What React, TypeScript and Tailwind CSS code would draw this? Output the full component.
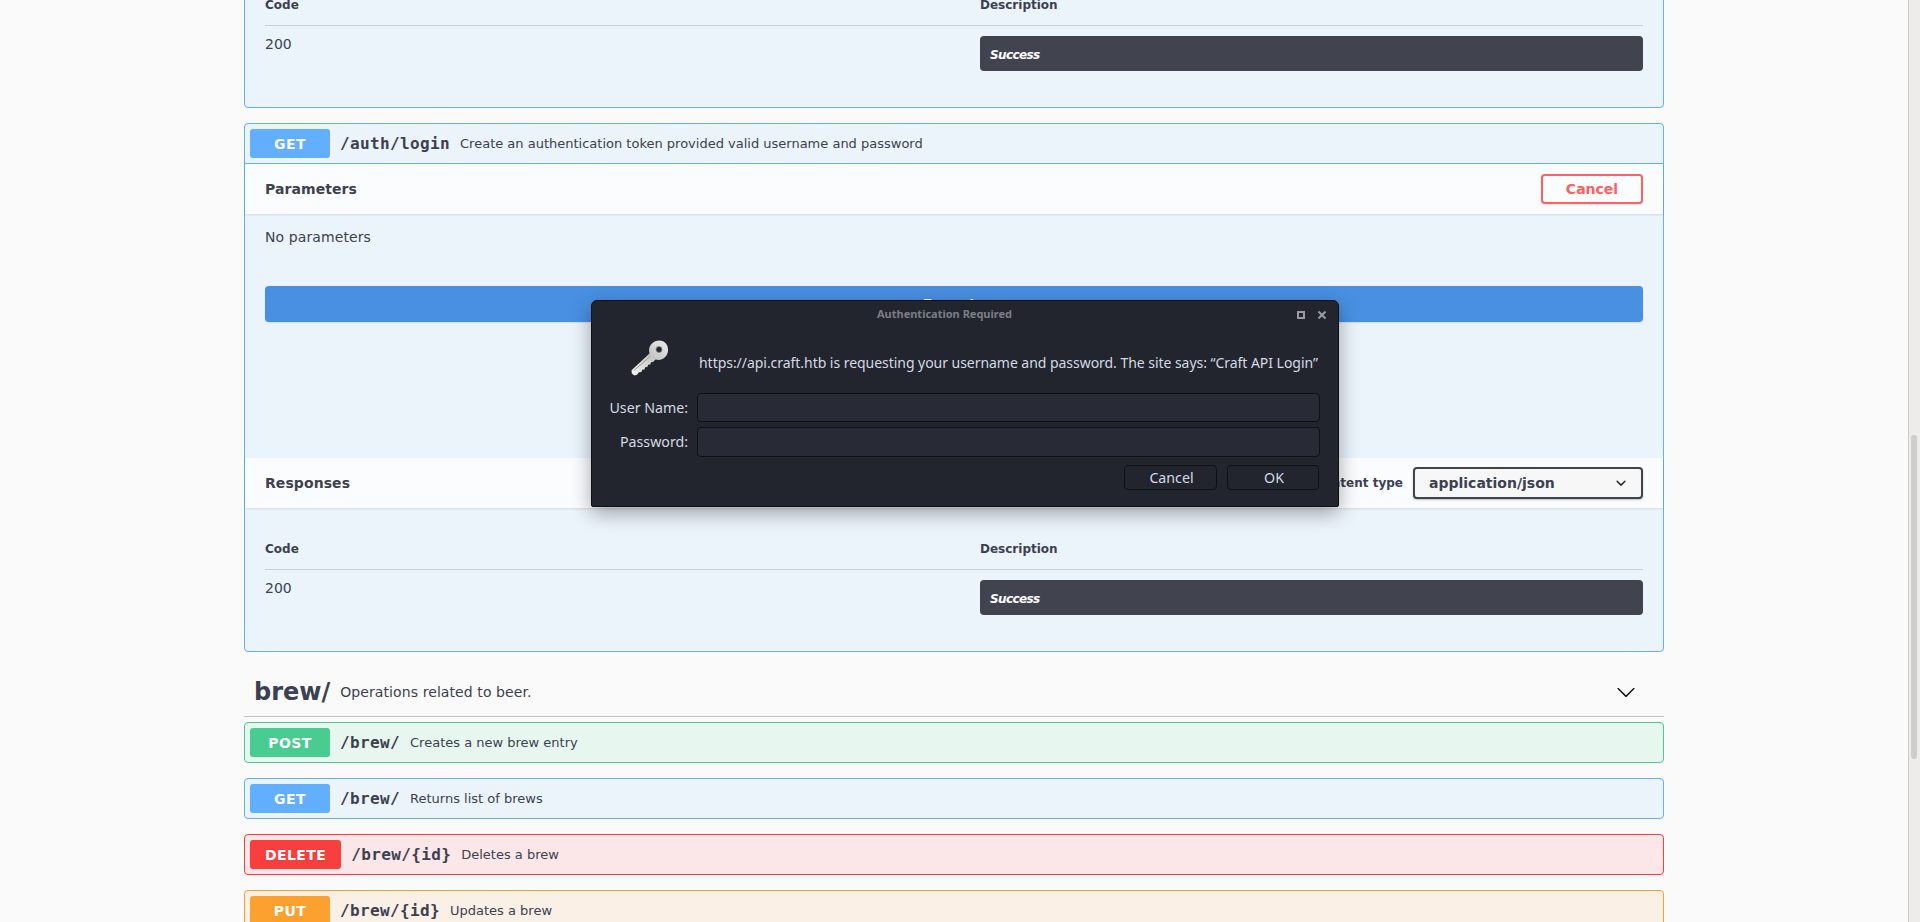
const SANS = "font-['DejaVu_Sans',sans-serif]";

const OPS = [
  { method: "POST", path: "/brew/", desc: "Creates a new brew entry", box: "border-[#49cc90] bg-[#e8f6f0]", badge: "bg-[#49cc90]" },
  { method: "GET", path: "/brew/", desc: "Returns list of brews", box: "border-[#61affe] bg-[#ebf3fb]", badge: "bg-[#61affe]" },
  { method: "DELETE", path: "/brew/{id}", desc: "Deletes a brew", box: "border-[#f93e3e] bg-[#fbe7e7]", badge: "bg-[#f93e3e]" },
  { method: "PUT", path: "/brew/{id}", desc: "Updates a brew", box: "border-[#fca130] bg-[#faf0e6]", badge: "bg-[#fca130]" },
];

function Summary({ method, path, desc, badge }: { method: string; path: string; desc: string; badge: string }) {
  return (
    <div className="flex h-[39px] items-center px-[5px]">
      <span className={`flex h-[29px] min-w-[80px] items-center justify-center rounded-[3px] px-[15px] text-sm font-bold tracking-[0.4px] text-white ${badge}`}>
        {method}
      </span>
      <span className="px-[10px] font-['DejaVu_Sans_Mono',monospace] text-base font-bold tracking-[0.37px] text-[#3b4151]">{path}</span>
      <span className="text-[13px] text-[#3b4151]">{desc}</span>
    </div>
  );
}

function ResponseTable() {
  return (
    <div className="px-5 pb-[36px] pt-[29px] text-[#3b4151]">
      <div className="grid h-[33px] grid-cols-[715px_1fr] border-b border-[#3b415133] text-xs font-bold leading-[24px]">
        <div>Code</div>
        <div>Description</div>
      </div>
      <div className="grid grid-cols-[715px_1fr] pt-[10px]">
        <div className="-mt-[2px] text-sm leading-5">200</div>
        <div className="flex h-[35px] items-center rounded-[4px] bg-[#41444e] px-[10px] pt-[2px] text-xs font-bold italic tracking-[-0.6px] text-white">Success</div>
      </div>
    </div>
  );
}

function SectionBand({ title, children }: { title: string; children: React.ReactNode }) {
  return (
    <div className="flex h-[50px] items-center justify-between bg-[#fbfcfe] px-5 shadow-[0_1px_2px_rgba(0,0,0,0.1)]">
      <div className="text-sm font-bold tracking-[0.08px] text-[#3b4151]">{title}</div>
      {children}
    </div>
  );
}

function TagArrow() {
  return (
    <svg viewBox="0 0 20 20" className="h-5 w-5 fill-[#111]">
      <path d="M17.418 6.109c.272-.268.709-.268.979 0s.271.701 0 .969l-7.908 7.83c-.27.268-.707.268-.979 0l-7.908-7.83c-.27-.268-.27-.701 0-.969.271-.268.709-.268.979 0L10 13.25l7.418-7.141z" />
    </svg>
  );
}

function KeyIcon() {
  return (
    <svg viewBox="0 0 44 40" className="mt-[11px] h-[40px] w-[44px] shrink-0">
      <defs>
        <linearGradient id="keyFill" x1="0" y1="1" x2="1" y2="0">
          <stop offset="0" stopColor="#f4f4f2" />
          <stop offset="0.55" stopColor="#c6c6c3" />
          <stop offset="1" stopColor="#ececea" />
        </linearGradient>
      </defs>
      <path
        fill="url(#keyFill)"
        d="M21.5 14.5C19.5 7 25 1.5 31 1.5c6 0 9.5 4.5 9 10.5-.5 6-6.5 10.5-12.5 8.5L25 23l-2 .2-.6 2.3-2.4.2-.5 2.3-2.4.2-.6 2.3-2.4.2-.6 2.2-2.5.4L9 35.7l-2.6.9-2.6-2.2-.3-3.2z"
      />
      <path d="M6 31.5 22.5 17" stroke="#9a9a98" strokeWidth="1" fill="none" />
      <circle cx="31" cy="10.5" r="3" fill="#23252e" stroke="#8f8f8c" strokeWidth="0.8" />
    </svg>
  );
}

function AuthDialog() {
  return (
    <div className="absolute left-[591px] top-[300px] flex h-[207px] w-[748px] flex-col rounded-t-[6px] rounded-b-[2px] border border-[#0d0e12] bg-[#23252e] font-['Noto_Sans',sans-serif] text-[14.2px] text-[#d3dae3] shadow-[0_6px_20px_rgba(0,0,0,0.35)]">
      <div className="flex h-[27px] shrink-0 items-center">
        <div className="flex-1 text-center text-[11px] font-bold text-[#7b7e86]">Authentication Required</div>
        <div className="flex w-[41px] items-center gap-[13px]">
          <span className="h-2 w-2 border-2 border-[#9a9ca2]" />
          <svg viewBox="0 0 8 8" className="h-2 w-2 stroke-[#9a9ca2] stroke-2">
            <path d="M0.5 0.5 7.5 7.5M7.5 0.5 0.5 7.5" />
          </svg>
        </div>
      </div>
      <div className="flex h-[54px] shrink-0 items-start pl-[36px]">
        <KeyIcon />
        <div className="ml-[27px] mt-[25px] whitespace-nowrap text-sm leading-[20px] tracking-[-0.04px]">
          https://api.craft.htb is requesting your username and password. The site says: “Craft API Login”
        </div>
      </div>
      <div className="mt-[11px] grid grid-cols-[96px_623px] gap-x-[9px] gap-y-[5px]">
        <div className="flex h-[29px] items-center justify-end">User Name:</div>
        <div className="h-[29px] rounded-[4px] border border-[#0f1014] bg-[#282a35]" />
        <div className="flex h-[30px] items-center justify-end">Password:</div>
        <div className="h-[30px] rounded-[4px] border border-[#0f1014] bg-[#282a35]" />
      </div>
      <div className="mt-[8px] flex justify-end gap-[10px] pr-[19px]">
        <div className="flex h-[25px] w-[93px] items-center justify-center rounded-[4px] border border-[#0f1014] bg-[#23252e] pl-[2px]">Cancel</div>
        <div className="flex h-[25px] w-[92px] items-center justify-center rounded-[4px] border border-[#0f1014] bg-[#23252e] pl-[2px]">OK</div>
      </div>
    </div>
  );
}

export default function App() {
  return (
    <div className={`relative flex h-[922px] overflow-hidden bg-[#fafafa] ${SANS}`}>
      <main className="min-w-0 flex-1">
        <div className="mx-auto w-[1420px]">
          {/* first operation is scrolled past the top of the window */}
          <div className="-mt-[37px] rounded-[4px] border border-[#61affe] bg-[#ebf3fb]">
            <ResponseTable />
          </div>

          {/* expanded login operation */}
          <div className="mt-[15px] rounded-[4px] border border-[#61affe] bg-[#ebf3fb]">
            <div className="border-b border-[#61affe]">
              <Summary
                method="GET"
                path="/auth/login"
                desc="Create an authentication token provided valid username and password"
                badge="bg-[#61affe]"
              />
            </div>
            <SectionBand title="Parameters">
              <div className="flex h-[30px] w-[102px] items-center justify-center rounded-[4px] border-2 border-[#ff6060] text-sm font-bold text-[#ff6060] shadow-[0_1px_2px_rgba(0,0,0,0.1)]">
                Cancel
              </div>
            </SectionBand>
            <div className="px-5 pb-[136px] pt-[13px]">
              <div className="text-sm leading-5 tracking-[0.1px] text-[#3b4151]">No parameters</div>
              <div className="mt-[39px] flex h-[36px] items-center justify-center rounded-[4px] bg-[#4990e2] text-sm font-bold text-white shadow-[0_1px_2px_rgba(0,0,0,0.1)]">
                Execute
              </div>
            </div>
            <SectionBand title="Responses">
              <div className="flex items-center gap-[10px]">
                <span className="text-xs font-bold text-[#3b4151]">Response content type</span>
                <div className="flex h-[32px] w-[230px] items-center justify-between rounded-[4px] border-2 border-[#41444e] bg-[#f7f7f7] pl-[14px] pr-[10px] text-sm font-bold text-[#3b4151] shadow-[0_1px_2px_rgba(0,0,0,0.25)]">
                  application/json
                  <svg viewBox="0 0 20 20" className="h-5 w-5 fill-[#222]">
                    <path d="M13.418 7.859a.695.695 0 0 1 .978 0 .68.68 0 0 1 0 .969l-3.908 3.83a.697.697 0 0 1-.979 0l-3.908-3.83a.68.68 0 0 1 0-.969.695.695 0 0 1 .978 0L10 11l3.418-3.141z" />
                  </svg>
                </div>
              </div>
            </SectionBand>
            <ResponseTable />
          </div>

          {/* brew tag */}
          <div className="mb-[5px] mt-[15px] flex h-[50px] items-center border-b border-[#3b41514d] pl-[10px] pr-[28px]">
            <span className="text-2xl font-bold text-[#3b4151]">brew/</span>
            <span className="flex-1 pl-[10px] text-sm tracking-[0.09px] text-[#3b4151]">Operations related to beer.</span>
            <TagArrow />
          </div>
          {OPS.map((op) => (
            <div key={op.method} className={`mb-[15px] rounded-[4px] border ${op.box}`}>
              <Summary method={op.method} path={op.path} desc={op.desc} badge={op.badge} />
            </div>
          ))}
        </div>
      </main>

      <div className="w-3 shrink-0 border-l border-[#cfc9c4] bg-[#edecea] pl-[2px] pt-[435px]">
        <div className="h-[324px] w-[6px] rounded-[3px] bg-[#cdcdcd]" />
      </div>

      <AuthDialog />
    </div>
  );
}
